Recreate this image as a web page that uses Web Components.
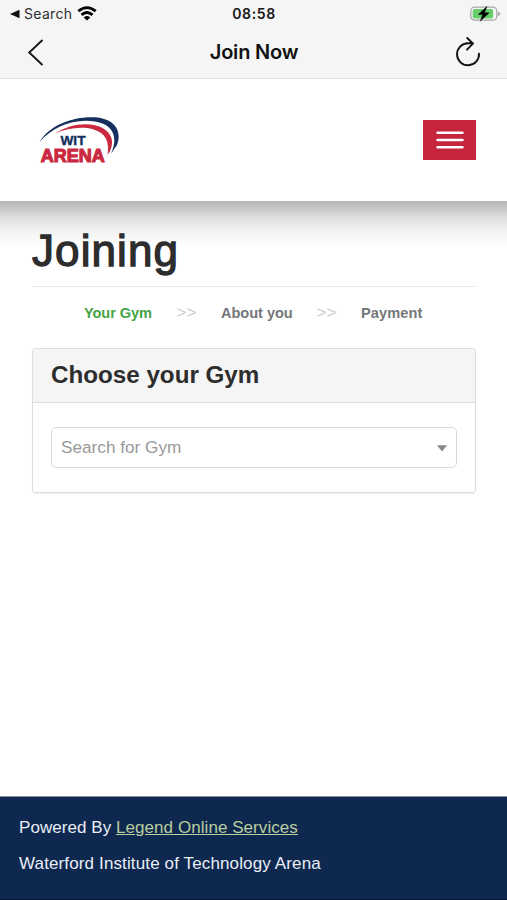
<!DOCTYPE html>
<html lang="en"><head><meta charset="utf-8"><title>Join Now</title>
<style>html,body{margin:0;background:#fff}body{font-family:"Liberation Sans",Arial,sans-serif}</style></head>
<body><join-app></join-app>
<script>
const define = (name, html) => customElements.define(name, class extends HTMLElement {
  constructor() { super(); this.attachShadow({mode: 'open'}).innerHTML = html; }
});

define('status-bar', `<style>
:host{display:grid;grid-template-columns:1fr auto 1fr;align-items:center;height:27px;font-family:Inter,sans-serif;color:#171717}
.back{display:flex;align-items:center;padding-left:10px;font-size:14px;letter-spacing:.3px;color:#303030}
.back span{margin-left:4px}.wifi{margin-left:5px}
.time{font-size:14px;font-weight:600;letter-spacing:.6px;padding-left:1px}
.bat{justify-self:end;margin-right:6px}svg{display:block}
</style><div class="back"><svg width="10" height="10"><path d="M0 5 9.5 .8V9.2Z" fill="#111"/></svg><span>Search</span>
<svg class="wifi" width="20" height="15" viewBox="0 0 20 15" fill="none" stroke="#000" stroke-width="2.8"><path d="M1.3 5.2Q10-1.9 18.7 5.2"/><path d="M4.5 8.9Q10 4.2 15.5 8.9"/><path d="M10 14.4 6.7 11.4Q10 8.7 13.3 11.4Z" fill="#000" stroke="none"/></svg></div>
<div class="time">08:58</div>
<svg class="bat" width="31" height="16" viewBox="0 0 31 16"><rect x=".8" y="1.2" width="26" height="13" rx="4" fill="#f7f7f7" stroke="#a8a8a8" stroke-width="1.3"/><rect x="2.7" y="3" width="20.5" height="9.5" rx="2" fill="#68ce6c"/><path d="M28 5.4Q30.3 6.2 30.3 7.8T28 10.2Z" fill="#a8a8a8"/><path d="M17 .3 8.2 8.6h4.5l-2.5 6.6 9-8.4h-4.7Z" fill="#000" stroke="#000" stroke-width=".4"/></svg>`);

define('title-bar', `<style>
:host{display:grid;grid-template-columns:1fr auto 1fr;align-items:center;height:51px;border-bottom:1px solid #e3e3e3}
h1{margin:-2px 0 0 1px;font:600 20px/24px Inter,sans-serif;color:#111;letter-spacing:-.2px}
svg{display:block}.l{margin:-2px 0 0 27px}.r{justify-self:end;margin:-1px 25px 0 0}
</style><svg class="l" width="18" height="28" fill="none" stroke="#111" stroke-width="1.8"><path d="M15.5 2 2.2 14.5 15.5 27"/></svg><h1><slot></slot></h1>
<svg class="r" width="28" height="32" fill="none" stroke="#111" stroke-width="1.9"><path d="M25 17.6A11 11 0 1 1 14 7.3H18.6M13.2 2 19 7.6 13 13.6" stroke-linecap="round"/></svg>`);

define('arena-logo', `<style>:host{display:block}svg{display:block}text{font-family:"Liberation Sans",Arial,sans-serif;font-weight:700}</style>
<svg width="82" height="52" viewBox="0 0 82 52"><path d="M1.5 27C12 9 37 1 57 2.3 78 4 84 17 79 30L73 38.5C81 21 74 9 57 6.5 35 3.3 15 12 1.5 27Z" fill="#15305e"/><path d="M17 18.5C29 10.5 44 7.5 56 10 71 13 78 24 72 36L69.5 40C71.5 27 68 18 55 14.3 43 11 29 13.4 17 18.5Z" fill="#cb2940"/>
<text x="22.5" y="30" font-size="13.6" textLength="25" lengthAdjust="spacingAndGlyphs" fill="#15305e" stroke="#15305e" stroke-width=".4">WIT</text><text x="2.8" y="47" font-size="19.2" textLength="64" lengthAdjust="spacingAndGlyphs" fill="#cb2940" stroke="#cb2940" stroke-width="1.2">ARENA</text></svg>`);

define('menu-button', `<style>:host{display:flex;align-items:center;justify-content:center;box-sizing:border-box;width:53px;height:40px;background:#c5263e}</style><svg width="28" height="20" stroke="#fff" stroke-width="2.5" stroke-linecap="round"><path d="M1.5 2.7h25M1.5 10h25M1.5 17.3h25"/></svg>`);

define('site-header', `<style>:host{display:flex;box-sizing:border-box;justify-content:space-between;height:122px;padding:36px 31px 0 38px;background:#fff;position:relative}
menu-button{margin-top:5px}
:host::after{content:"";position:absolute;left:0;right:0;top:100%;height:46px;background:linear-gradient(#b5b5b5,#c5c5c5 15%,#dedede 36%,#f2f2f2 64%,#fff)}</style><arena-logo></arena-logo><menu-button></menu-button>`);

define('join-steps', `<style>:host{display:flex;align-items:center;padding-left:52px;height:20px;margin-top:15.5px;font-size:14.6px;font-weight:700;color:#74777a;white-space:nowrap}
span{box-sizing:border-box}.on{color:#47a447;width:92.5px;letter-spacing:-.1px}.sep{font-weight:400;font-size:17px;color:#ccc;width:44.5px}.ab{width:95.5px;letter-spacing:-.05px}.pay{letter-spacing:.1px}</style>
<span class="on">Your Gym</span><span class="sep">&gt;&gt;</span><span class="ab">About you</span><span class="sep">&gt;&gt;</span><span class="pay">Payment</span>`);

define('gym-select', `<style>:host{display:flex;align-items:center;justify-content:space-between;box-sizing:border-box;height:41px;padding:0 9px;border:1px solid #d9d9d9;border-radius:5px;color:#999;font-size:17.2px}svg{display:block;margin-top:2px}</style><slot></slot><svg width="10" height="7"><path d="M0 .2H10L5 6.5Z" fill="#888"/></svg>`);

define('panel-card', `<style>:host{display:block;box-sizing:border-box;height:145px;margin-top:25.5px;border:1px solid #ddd;border-radius:3px;box-shadow:0 1px 1px #0001}
h3{box-sizing:border-box;height:54px;margin:0;padding:0 18px;background:#f5f5f5;border-bottom:1px solid #ddd;font-size:24.2px;line-height:52px;color:#2d2d2d}.b{padding:24px 18px 0}</style><h3><slot name="title"></slot></h3><div class="b"><slot></slot></div>`);

define('site-footer', `<style>:host{display:block;box-sizing:border-box;height:104px;padding:21px 19px 0;background:#0e2850;border-top:1px solid #8290a6;border-bottom:1px solid #07162f;color:#e9eef6;font-size:17px;line-height:20px;white-space:nowrap}p{margin:0 0 16px}.p{letter-spacing:.06px}.w{letter-spacing:.13px}a{color:#b9cf9f;text-decoration:underline}</style><p class="p">Powered By <a>Legend Online Services</a></p><p class="w">Waterford Institute of Technology Arena</p>`);

define('join-app', `<style>:host{display:flex;flex-direction:column;height:900px;overflow:hidden}.top{background:#f5f5f5}
main{flex:1;padding:0 31px 0 32px;position:relative}h2{margin:0;height:86px;box-sizing:border-box;padding-top:25px;border-bottom:1px solid #eaeaea;font-size:44px;line-height:50px;font-weight:400;color:#2d2d2d;-webkit-text-stroke:1.3px #2d2d2d;letter-spacing:1.1px}</style>
<div class="top"><status-bar></status-bar><title-bar>Join Now</title-bar></div><site-header></site-header>
<main><h2>Joining</h2><join-steps></join-steps><panel-card><span slot="title">Choose your Gym</span><gym-select>Search for Gym</gym-select></panel-card></main><site-footer></site-footer>`);
</script></body></html>
